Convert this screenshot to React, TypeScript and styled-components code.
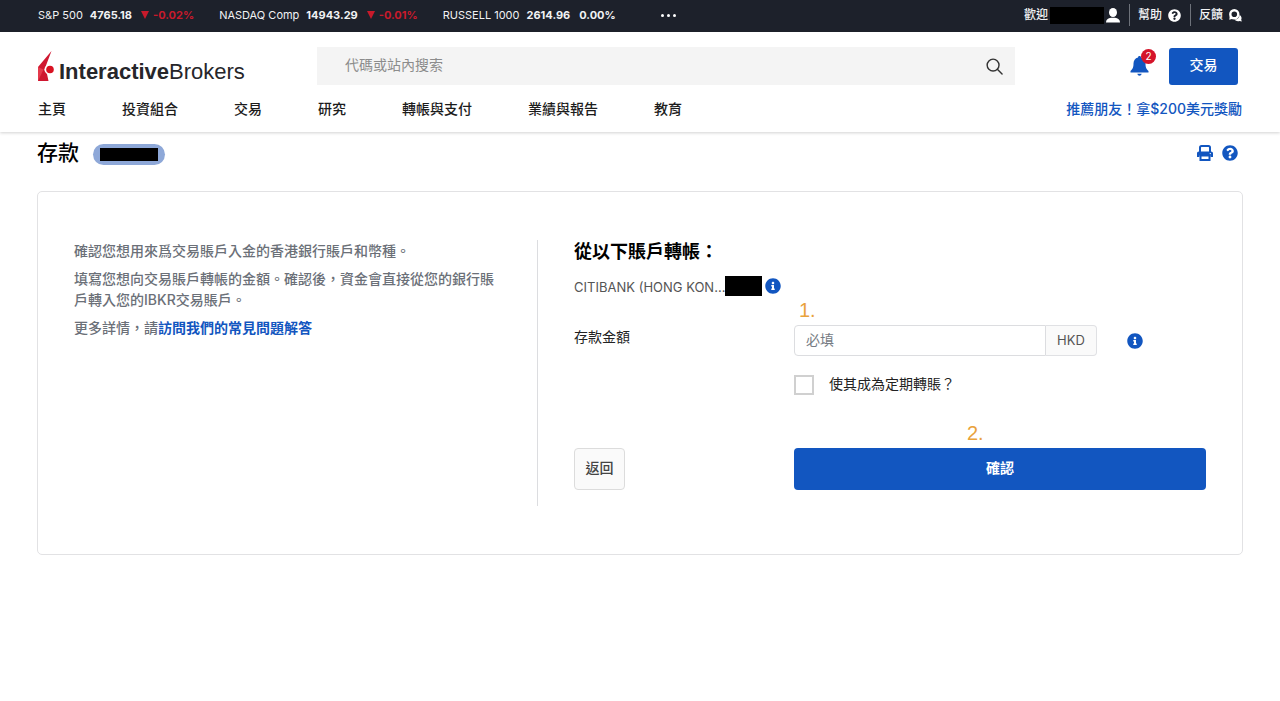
import React from 'react';
import styled, { createGlobalStyle, css } from 'styled-components';
import { FaInfoCircle, FaQuestionCircle } from 'react-icons/fa';

const blue = '#1256c0';

const GlobalStyle = createGlobalStyle`
  *, *::before, *::after { box-sizing: border-box; }
  body {
    margin: 0;
    background: #fff;
    color: #1c1c1c;
    font-family: Inter, "Noto Sans CJK TC", sans-serif;
    font-size: 14px;
    line-height: 21px;
  }
  button, input { font: inherit; color: inherit; }
  a { text-decoration: none; color: inherit; }
  h1, h2, p, ul { margin: 0; padding: 0; }
  svg { display: block; flex: none; }
`;

const TopBar = styled.div`
  display: flex;
  justify-content: space-between;
  align-items: center;
  height: 32px;
  padding: 0 38px 2px;
  background: #1d212b;
  color: #f1f2f4;
  font-size: 11px;
  line-height: 16px;
`;

const Tickers = styled.ul`
  display: flex;
  align-items: center;
  gap: 25px;
  list-style: none;
`;

const Ticker = styled.li`
  display: flex;
  align-items: center;
  gap: 7px;
`;

const Change = styled.strong<{ $down?: boolean }>`
  display: flex;
  align-items: center;
  gap: 4px;
  color: ${p => (p.$down ? '#c81a2b' : 'inherit')};
  margin-left: 2px;
`;

const MoreButton = styled.button`
  display: flex;
  gap: 3px;
  border: 0;
  padding: 6px 0;
  margin-left: 20px;
  background: none;
`;

const Dot = styled.span`
  width: 3px;
  height: 3px;
  border-radius: 50%;
  background: #fff;
`;

const Utilities = styled.div`
  display: flex;
  align-items: center;
  font-size: 12px;
`;

const UtilityLink = styled.a<{ $gap?: number }>`
  display: flex;
  align-items: center;
  gap: ${p => p.$gap ?? 6}px;
  height: 22px;
  font-weight: 500;
  & + & {
    margin-left: 9px;
    padding-left: 8px;
    border-left: 1px solid #6e727a;
  }
`;

const Masked = styled.span<{ $w: number; $h: number }>`
  display: inline-block;
  flex: none;
  width: ${p => p.$w}px;
  height: ${p => p.$h}px;
  background: #000;
`;

const Header = styled.header`
  padding: 15px 38px 0;
  background: #fff;
  box-shadow: 0 1px 3px rgba(0, 0, 0, 0.18);
`;

const HeaderRow = styled.div`
  display: flex;
  align-items: center;
`;

const Logo = styled.a`
  display: flex;
  align-items: flex-end;
  gap: 4px;
  width: 279px;
  color: #26262a;
  font-family: "Liberation Sans", Arial, sans-serif;
  font-size: 22px;
  line-height: 20px;
`;

const Search = styled.form`
  display: flex;
  align-items: center;
  flex: 1;
  height: 38px;
  padding: 0 12px 0 28px;
  background: #f4f4f4;
`;

const SearchInput = styled.input`
  flex: 1;
  min-width: 0;
  border: 0;
  outline: 0;
  padding: 0 0 3px;
  background: none;
  &::placeholder { color: #8c8c8c; opacity: 1; }
`;

const IconButton = styled.button`
  position: relative;
  display: flex;
  border: 0;
  padding: 0;
  background: none;
`;

const HeaderActions = styled.div`
  display: flex;
  align-items: center;
  justify-content: flex-end;
  gap: 20px;
  width: 227px;
  padding-right: 4px;
`;

const Badge = styled.span`
  position: absolute;
  top: -7px;
  right: -7px;
  width: 15px;
  height: 15px;
  border-radius: 50%;
  background: #d5142a;
  color: #fff;
  font-size: 10px;
  line-height: 15px;
  text-align: center;
`;

const Button = styled.button<{ $kind: 'primary' | 'plain' }>`
  border-radius: 4px;
  padding: 0 0 3px;
  font-weight: 500;
  ${p =>
    p.$kind === 'primary'
      ? css`
          border: 0;
          background: ${blue};
          color: #fff;
        `
      : css`
          border: 1px solid #dcdcdc;
          background: #fafafa;
          color: #444;
        `}
`;

const TradeButton = styled(Button)`
  width: 69px;
  height: 37px;
  border-radius: 3px;
`;

const Nav = styled.nav`
  display: flex;
  align-items: center;
  gap: 56px;
  height: 47px;
  font-weight: 500;
`;

const PromoLink = styled.a`
  margin-left: auto;
  color: ${blue};
`;

const Main = styled.main`
  padding: 9px 37px 40px;
`;

const TitleRow = styled.div`
  display: flex;
  align-items: center;
  height: 24px;
`;

const Title = styled.h1`
  color: #000;
  font-size: 21px;
  line-height: 24px;
  font-weight: 500;
`;

const AccountPill = styled.span`
  display: flex;
  align-items: center;
  justify-content: center;
  width: 72px;
  height: 21px;
  margin-left: 14px;
  margin-top: 2px;
  border-radius: 11px;
  background: #8ea8d8;
`;

const TitleActions = styled.div`
  display: flex;
  gap: 9px;
  margin-left: auto;
  padding-right: 5px;
  color: ${blue};
  button { color: inherit; }
`;

const Card = styled.section`
  display: grid;
  grid-template-columns: 41fr 59fr;
  margin-top: 26px;
  padding: 48px 36px;
  border: 1px solid #e2e2e4;
  border-radius: 5px;
`;

const Intro = styled.div`
  display: flex;
  flex-direction: column;
  gap: 7px;
  padding-right: 36px;
  border-right: 1px solid #dcdde0;
  color: #6b7078;
  font-weight: 500;
  a { color: ${blue}; font-weight: 700; }
`;

const Form = styled.form`
  display: grid;
  grid-template-columns: 8fr 15fr;
  padding-left: 36px;
`;

const FormHeading = styled.h2`
  grid-column: 1 / -1;
  color: #000;
  font-size: 18px;
  line-height: 24px;
  font-weight: 700;
`;

const Source = styled.div`
  grid-column: 1 / -1;
  display: flex;
  align-items: center;
  height: 20px;
  margin: 12px 0 29px;
  svg { margin-left: 3px; color: ${blue}; }
`;

const BankName = styled.span`
  padding-top: 2px;
  color: #555;
  font-size: 13px;
`;

const FieldLabel = styled.label`
  line-height: 24px;
  color: #222;
`;

const Field = styled.div`
  position: relative;
  display: flex;
  align-items: center;
  svg { margin-left: 30px; color: ${blue}; }
`;

const Step = styled.span<{ $left: string }>`
  position: absolute;
  left: ${p => p.$left};
  bottom: 100%;
  margin-bottom: 5px;
  color: #e9a23b;
  font-family: "Liberation Sans", Arial, sans-serif;
  font-size: 20px;
  line-height: 20px;
`;

const AmountInput = styled.input`
  width: 252px;
  height: 31px;
  border: 1px solid #dcdde0;
  border-radius: 4px 0 0 4px;
  padding: 0 11px 3px;
  background: #fff;
  &::placeholder { color: #777c84; opacity: 1; }
`;

const Currency = styled.span`
  width: 51px;
  height: 31px;
  border: 1px solid #e0e1e4;
  border-left: 0;
  border-radius: 0 4px 4px 0;
  background: #fafafa;
  color: #555;
  font-size: 13px;
  line-height: 29px;
  text-align: center;
`;

const Recurring = styled.label`
  grid-column: 2;
  display: flex;
  align-items: center;
  gap: 15px;
  height: 18px;
  margin: 18px 0 56px;
  color: #222;
`;

const Checkbox = styled.input`
  appearance: none;
  width: 20px;
  height: 20px;
  margin: 4px 0 0;
  border: 2px solid #d0d0d0;
  background: #fff;
`;

const BackButton = styled(Button)`
  width: 51px;
  height: 42px;
`;

const ConfirmButton = styled(Button)`
  width: 100%;
  height: 42px;
  font-weight: 700;
`;

const FormFoot = styled.div`
  grid-column: 1 / -1;
  height: 16px;
`;

const DownArrow = () => (
  <svg width="8" height="8" viewBox="0 0 8 8" aria-hidden="true">
    <path d="M0 0h8L4 8z" fill="currentColor" />
  </svg>
);

const LogoMark = () => (
  <svg width="17" height="31" viewBox="0 0 17 31" aria-hidden="true">
    <path d="M13.500 0 8 14.500 6.500 19 9 23 10.500 30H0V16z" fill="#cf1730" />
    <path d="M0 16 5.500 18.500 0 30z" fill="#e43a4b" />
    <circle cx="11.500" cy="18.500" r="5" fill="#fff" />
    <circle cx="12" cy="18.500" r="3.800" fill="#d81222" />
  </svg>
);

const PersonIcon = () => (
  <svg width="14" height="15" viewBox="0 0 14 15" aria-hidden="true">
    <ellipse cx="7" cy="4.500" rx="4" ry="4.500" fill="#fff" />
    <path d="M0 14.500c0-3 2-4.300 5-4.800h4c3 .5 5 1.800 5 4.800z" fill="#fff" />
  </svg>
);

const FeedbackIcon = () => (
  <svg width="13" height="13" viewBox="0 0 13 13" aria-hidden="true">
    <path d="M10.500 5.800c1.700 1.200 2.600 3 1.700 4.600l.6 2.100-2.200-.6c-1.900.6-4 .1-5-1.300 3 0 5-2 4.900-4.800z" fill="#fff" />
    <circle cx="5.300" cy="5.300" r="4" fill="none" stroke="#fff" strokeWidth="2.400" />
    <path d="M.8 6.500.3 10.700l3.500-1z" fill="#fff" />
  </svg>
);

const SearchIcon = () => (
  <svg width="17" height="17" viewBox="0 0 18 18" fill="none" stroke="#333" strokeWidth="1.500" aria-hidden="true">
    <circle cx="7.500" cy="7.500" r="6.300" />
    <path d="m12 12 5 5" strokeLinecap="round" />
  </svg>
);

const BellIcon = () => (
  <svg width="19" height="20" viewBox="0 0 19 20" fill={blue} aria-hidden="true">
    <path d="M9.500 0c1 0 1.500.6 1.500 1.500 3 .8 4.500 3 4.500 6 0 4 .8 5.500 3 7.500v1.500H.5V15c2.200-2 3-3.500 3-7.500 0-3 1.500-5.200 4.500-6C8 .6 8.500 0 9.500 0z" />
    <path d="M7.300 17.800h4.400c-.3 1.200-1.100 1.900-2.200 1.900s-1.900-.7-2.200-1.900z" />
  </svg>
);

const PrintIcon = () => (
  <svg width="16" height="16" viewBox="0 0 16 16" fill="none" stroke="currentColor" strokeWidth="2" aria-hidden="true">
    <path d="M3 7V2.500C3 1.500 3.500 1 4.500 1h7c1 0 1.500.5 1.500 1.500V7" />
    <path d="M2 6.500h12c1.300 0 2 .7 2 2V12h-2.500v-1.500h-11V12H0V8.500c0-1.300.7-2 2-2z" fill="currentColor" stroke="none" />
    <path d="M3.500 10.500V15h9v-4.500z" fill="#fff" />
    <circle cx="13.300" cy="8.600" r=".7" fill="#fff" stroke="none" />
  </svg>
);

const tickers = [
  { name: 'S&P 500', value: '4765.18', change: '-0.02%', down: true },
  { name: 'NASDAQ Comp', value: '14943.29', change: '-0.01%', down: true },
  { name: 'RUSSELL 1000', value: '2614.96', change: '0.00%', down: false },
];

const navItems = ['主頁', '投資組合', '交易', '研究', '轉帳與支付', '業績與報告', '教育'];

export default function App() {
  return (
    <>
      <GlobalStyle />
      <TopBar>
        <Tickers>
          {tickers.map(t => (
            <Ticker key={t.name}>
              <span>{t.name}</span>
              <strong>{t.value}</strong>
              <Change $down={t.down}>
                {t.down && <DownArrow />}
                {t.change}
              </Change>
            </Ticker>
          ))}
          <li>
            <MoreButton aria-label="更多">
              <Dot />
              <Dot />
              <Dot />
            </MoreButton>
          </li>
        </Tickers>
        <Utilities>
          <UtilityLink href="#account" $gap={2}>
            <span>歡迎</span>
            <Masked $w={54} $h={17} />
            <PersonIcon />
          </UtilityLink>
          <UtilityLink href="#help">
            幫助
            <FaQuestionCircle size={13} color="#fff" />
          </UtilityLink>
          <UtilityLink href="#feedback">
            反饋
            <FeedbackIcon />
          </UtilityLink>
        </Utilities>
      </TopBar>
      <Header>
        <HeaderRow>
          <Logo href="#home">
            <LogoMark />
            <span>
              <b>Interactive</b>Brokers
            </span>
          </Logo>
          <Search role="search">
            <SearchInput type="text" aria-label="搜索" placeholder="代碼或站內搜索" />
            <IconButton type="button" aria-label="搜索">
              <SearchIcon />
            </IconButton>
          </Search>
          <HeaderActions>
            <IconButton aria-label="通知">
              <BellIcon />
              <Badge>2</Badge>
            </IconButton>
            <TradeButton $kind="primary">交易</TradeButton>
          </HeaderActions>
        </HeaderRow>
        <Nav>
          {navItems.map(item => (
            <a key={item} href="#nav">
              {item}
            </a>
          ))}
          <PromoLink href="#refer">推薦朋友！拿$200美元獎勵</PromoLink>
        </Nav>
      </Header>
      <Main>
        <TitleRow>
          <Title>存款</Title>
          <AccountPill>
            <Masked $w={58} $h={13} />
          </AccountPill>
          <TitleActions>
            <IconButton aria-label="列印">
              <PrintIcon />
            </IconButton>
            <IconButton aria-label="幫助">
              <FaQuestionCircle size={16} />
            </IconButton>
          </TitleActions>
        </TitleRow>
        <Card>
          <Intro>
            <p>確認您想用來爲交易賬戶入金的香港銀行賬戶和幣種。</p>
            <p>填寫您想向交易賬戶轉帳的金額。確認後，資金會直接從您的銀行賬戶轉入您的IBKR交易賬戶。</p>
            <p>
              更多詳情，請<a href="#faq">訪問我們的常見問題解答</a>
            </p>
          </Intro>
          <Form>
            <FormHeading>從以下賬戶轉帳：</FormHeading>
            <Source>
              <BankName>CITIBANK (HONG KON...</BankName>
              <Masked $w={37} $h={20} />
              <FaInfoCircle size={16} />
            </Source>
            <FieldLabel htmlFor="amount">存款金額</FieldLabel>
            <Field>
              <Step $left="5px">1.</Step>
              <AmountInput id="amount" type="text" placeholder="必填" />
              <Currency>HKD</Currency>
              <FaInfoCircle size={16} />
            </Field>
            <Recurring>
              <Checkbox type="checkbox" />
              使其成為定期轉賬？
            </Recurring>
            <BackButton type="button" $kind="plain">
              返回
            </BackButton>
            <Field>
              <Step $left="42%">2.</Step>
              <ConfirmButton type="button" $kind="primary">
                確認
              </ConfirmButton>
            </Field>
            <FormFoot />
          </Form>
        </Card>
      </Main>
    </>
  );
}
